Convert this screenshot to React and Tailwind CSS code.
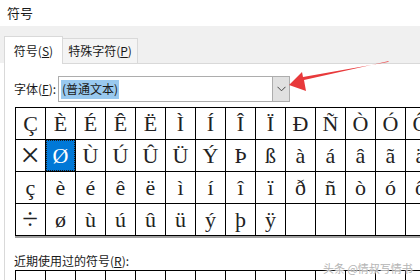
import React from "react";

// Character table rows, 14 columns each (last column clipped by the window).
const ROWS = [
  ["Ç", "È", "É", "Ê", "Ë", "Ì", "Í", "Î", "Ï", "Ð", "Ñ", "Ò", "Ó", "Ô"],
  ["×", "Ø", "Ù", "Ú", "Û", "Ü", "Ý", "Þ", "ß", "à", "á", "â", "ã", "ä"],
  ["ç", "è", "é", "ê", "ë", "ì", "í", "î", "ï", "ð", "ñ", "ò", "ó", "ô"],
  ["÷", "ø", "ù", "ú", "û", "ü", "ý", "þ", "ÿ", "", "", "", "", ""],
];

const UI_FONT = { fontFamily: '"Noto Sans CJK SC", "Noto Sans", sans-serif' };
const SERIF = { fontFamily: '"Liberation Serif", "DejaVu Serif", serif' };

function Cell({ ch, selected }) {
  let glyph = ch;
  if (ch === "×") glyph = <span className="inline-block scale-[1.6] font-light">×</span>;
  if (ch === "÷") glyph = <span className="inline-block scale-[1.3]">÷</span>;
  return (
    <div
      className={`flex h-[32px] w-[30px] items-center justify-center border-r border-b border-black text-[22px] leading-none ${
        selected ? "bg-[#0078d7] text-white" : "text-[#222]"
      }`}
      style={SERIF}
    >
      {selected ? (
        <div className="flex h-full w-full items-center justify-center border border-dotted border-[#1a1a1a]">
          {glyph}
        </div>
      ) : (
        glyph
      )}
    </div>
  );
}

export default function App() {
  return (
    <div className="relative h-[280px] w-[420px] overflow-hidden bg-white text-[12px] text-[#1a1a1a]" style={UI_FONT}>
      {/* Title */}
      <div className="flex h-[26px] items-center pl-[7px] text-[13px]">符号</div>

      {/* Tabs */}
      <div className="flex h-[37px] items-end bg-[#f0f0f0] pl-[4px]">
        <div className="relative z-10 -mb-px flex h-[28px] w-[59px] items-center justify-center border border-b-0 border-[#d9d9d9] bg-white">
          符号(<span className="underline">S</span>)
        </div>
        <div className="flex h-[25px] w-[75px] items-center justify-center border border-l-0 border-b-0 border-[#d9d9d9] bg-[#f4f4f4]">
          特殊字符(<span className="underline">P</span>)
        </div>
      </div>

      {/* Panel */}
      <div className="ml-[4px] h-full border-t border-l border-[#d9d9d9] bg-white pl-[9px]">
        <div className="mt-[12px] flex h-[26px] items-center">
          <span className="w-[44px]">
            字体(<span className="underline">F</span>):
          </span>
          <div className="flex h-[26px] w-[232px] items-center border border-[#adadad] bg-white pl-[2px]">
            <span className="flex h-[19px] items-center bg-[#99c9ef] px-[1px] text-[12px]">(普通文本)</span>
            <div className="ml-auto flex h-[24px] w-[17px] items-center justify-center border-l border-[#adadad] bg-[#e1e1e1]">
              <svg width="9" height="6" viewBox="0 0 9 6" fill="none">
                <path d="M0.5 0.8 L4.5 4.8 L8.5 0.8" stroke="#444" strokeWidth="1" />
              </svg>
            </div>
          </div>
        </div>

        {/* Symbol grid */}
        <div className="mt-[5px] ml-[1px] w-max border-t border-l border-black">
          {ROWS.map((row, r) => (
            <div key={r} className="flex">
              {row.map((ch, c) => (
                <Cell key={c} ch={ch} selected={r === 1 && c === 1} />
              ))}
            </div>
          ))}
        </div>
        <div className="ml-[1px] h-[2px] w-[420px] bg-[#a0a0a0]" />

        <div className="mt-[14px] h-[18px]">
          近期使用过的符号(<span className="underline">R</span>):
        </div>
        <div className="ml-[1px] flex w-max border-t border-l border-black">
          {Array.from({ length: 14 }).map((_, i) => (
            <div key={i} className="h-[32px] w-[30px] border-r border-black" />
          ))}
        </div>
      </div>

      {/* Red arrow annotation */}
      <svg className="absolute left-0 top-0" width="420" height="280" viewBox="0 0 420 280">
        <polygon points="389,61 304,80 306,91 289,85 302,72 303,77 388,62" fill="#e8393b" />
      </svg>

      {/* Watermark */}
      <div
        className="absolute left-[323px] top-[260px] whitespace-nowrap text-[11px] text-[#b4b4b4]"
        style={{ textShadow: "0 0 2px #fff, 0 0 2px #fff" }}
      >
        头条 @情叔写情书
      </div>
    </div>
  );
}
